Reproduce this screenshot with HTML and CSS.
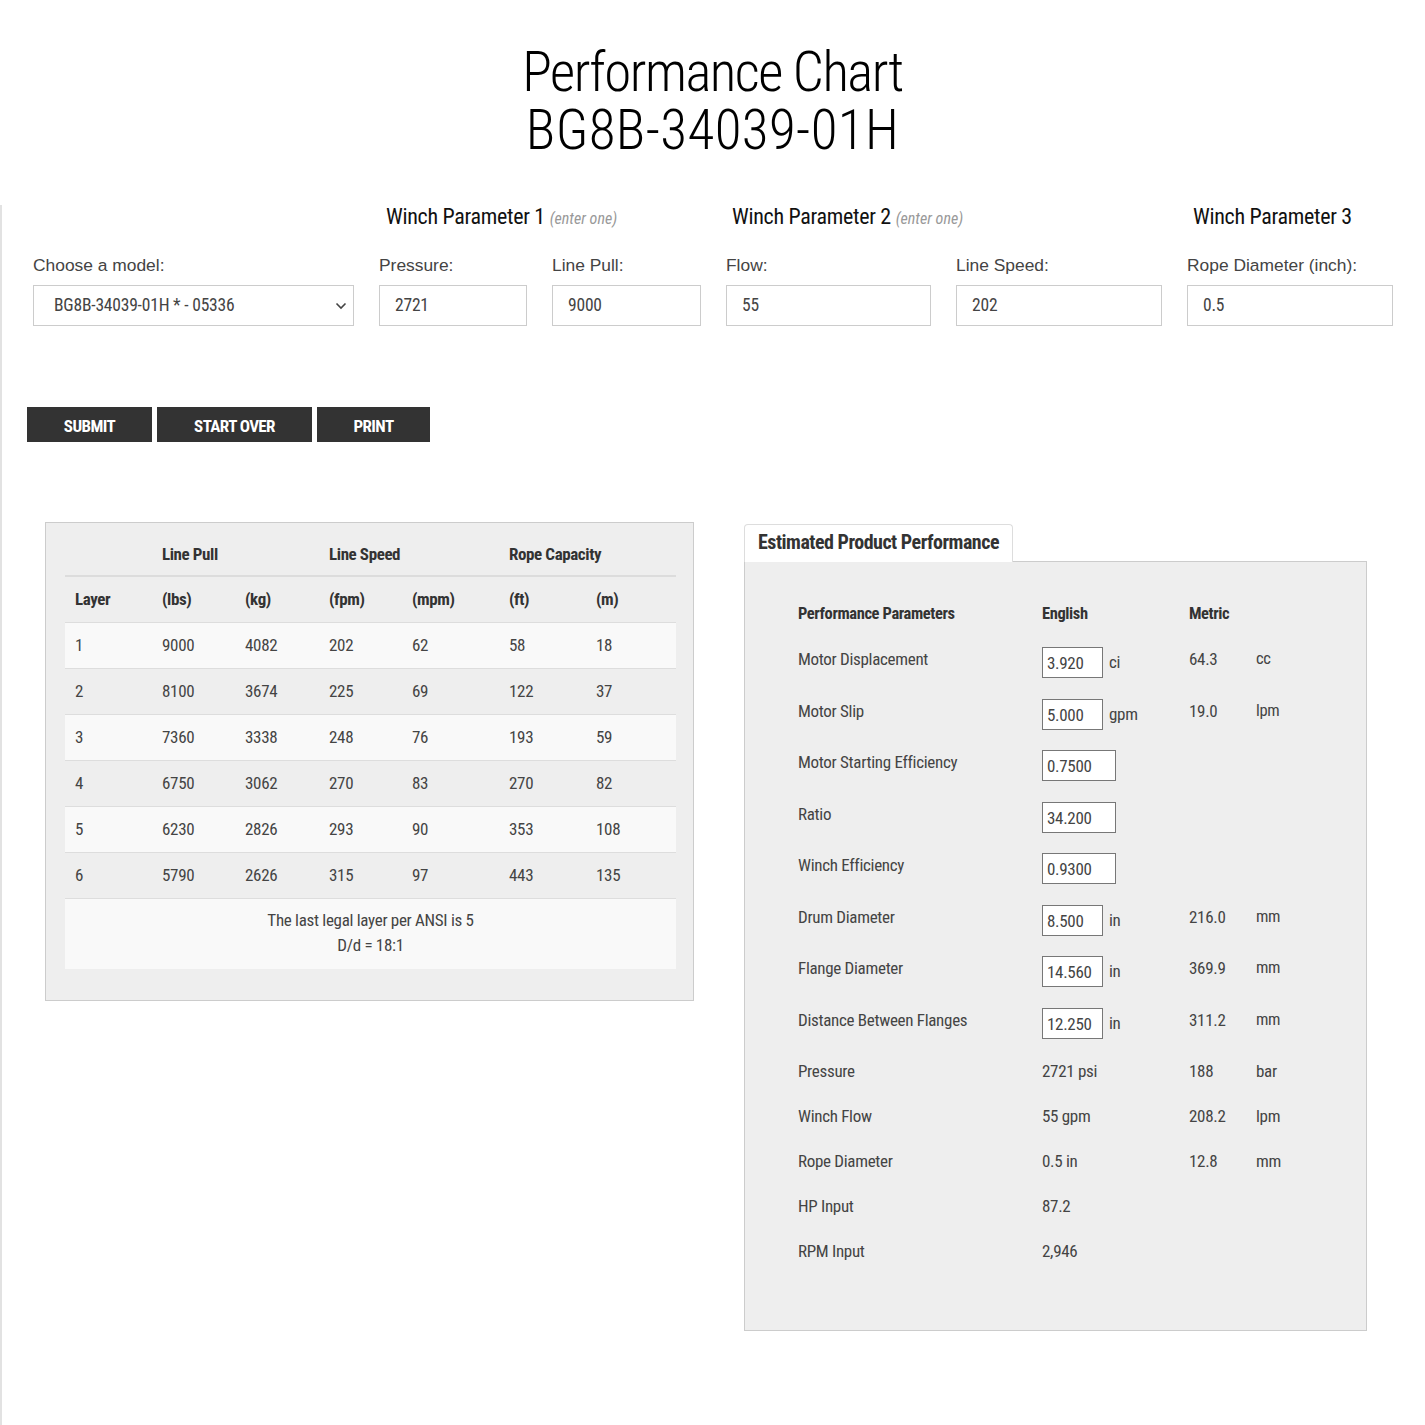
FILE: index.html
```html
<!DOCTYPE html>
<html lang="en">
<head>
<meta charset="utf-8">
<title>Performance Chart</title>
<link rel="stylesheet" href="styles.css">
</head>
<body>
<header class="page-title">
  <h1><span class="t1">Performance Chart</span><br><span class="t2">BG8B-34039-01H</span></h1>
</header>
<main class="content">
  <section class="params">
    <div class="param-heads">
      <div class="ph ph-1">Winch Parameter 1 <em>(enter one)</em></div>
      <div class="ph ph-2">Winch Parameter 2 <em>(enter one)</em></div>
      <div class="ph ph-3">Winch Parameter 3</div>
    </div>
    <div class="fields">
      <label class="field f-model"><span class="lbl">Choose a model:</span>
        <span class="select">BG8B-34039-01H * - 05336
          <svg class="chev" width="12" height="8" viewBox="0 0 12 8"><path d="M1.5 1.5 L6 6 L10.5 1.5" fill="none" stroke="#444" stroke-width="1.6"/></svg>
        </span>
      </label>
      <label class="field f-pressure"><span class="lbl">Pressure:</span><span class="inp">2721</span></label>
      <label class="field f-pull"><span class="lbl">Line Pull:</span><span class="inp">9000</span></label>
      <label class="field f-flow"><span class="lbl">Flow:</span><span class="inp">55</span></label>
      <label class="field f-speed"><span class="lbl">Line Speed:</span><span class="inp">202</span></label>
      <label class="field f-rope"><span class="lbl">Rope Diameter (inch):</span><span class="inp">0.5</span></label>
    </div>
  </section>

  <div class="buttons">
    <button class="btn b-submit">SUBMIT</button>
    <button class="btn b-start">START OVER</button>
    <button class="btn b-print">PRINT</button>
  </div>

  <section class="results">
    <div class="panel layers">
      <table class="layer-table">
        <colgroup>
          <col class="c1"><col class="c2"><col class="c3"><col class="c4"><col class="c5"><col class="c6"><col class="c7">
        </colgroup>
        <thead>
          <tr class="group-row"><th></th><th colspan="2">Line Pull</th><th colspan="2">Line Speed</th><th colspan="2">Rope Capacity</th></tr>
          <tr class="unit-row"><th>Layer</th><th>(lbs)</th><th>(kg)</th><th>(fpm)</th><th>(mpm)</th><th>(ft)</th><th>(m)</th></tr>
        </thead>
        <tbody>
          <tr class="odd"><td>1</td><td>9000</td><td>4082</td><td>202</td><td>62</td><td>58</td><td>18</td></tr>
          <tr><td>2</td><td>8100</td><td>3674</td><td>225</td><td>69</td><td>122</td><td>37</td></tr>
          <tr class="odd"><td>3</td><td>7360</td><td>3338</td><td>248</td><td>76</td><td>193</td><td>59</td></tr>
          <tr><td>4</td><td>6750</td><td>3062</td><td>270</td><td>83</td><td>270</td><td>82</td></tr>
          <tr class="odd"><td>5</td><td>6230</td><td>2826</td><td>293</td><td>90</td><td>353</td><td>108</td></tr>
          <tr><td>6</td><td>5790</td><td>2626</td><td>315</td><td>97</td><td>443</td><td>135</td></tr>
          <tr class="odd note"><td colspan="7">The last legal layer per ANSI is 5<br>D/d = 18:1</td></tr>
        </tbody>
      </table>
    </div>

    <div class="perf">
      <div class="tab">Estimated Product Performance</div>
      <div class="panel perf-panel">
        <div class="prow head"><span>Performance Parameters</span><span>English</span><span>Metric</span><span></span></div>
        <div class="prow irow"><span>Motor Displacement</span><span class="eng"><span class="box">3.920</span><span class="u">ci</span></span><span>64.3</span><span class="mu">cc</span></div>
        <div class="prow irow"><span>Motor Slip</span><span class="eng"><span class="box">5.000</span><span class="u">gpm</span></span><span>19.0</span><span class="mu">lpm</span></div>
        <div class="prow irow"><span>Motor Starting Efficiency</span><span class="eng"><span class="box wide">0.7500</span></span><span></span><span></span></div>
        <div class="prow irow"><span>Ratio</span><span class="eng"><span class="box wide">34.200</span></span><span></span><span></span></div>
        <div class="prow irow"><span>Winch Efficiency</span><span class="eng"><span class="box wide">0.9300</span></span><span></span><span></span></div>
        <div class="prow irow"><span>Drum Diameter</span><span class="eng"><span class="box">8.500</span><span class="u">in</span></span><span>216.0</span><span class="mu">mm</span></div>
        <div class="prow irow"><span>Flange Diameter</span><span class="eng"><span class="box">14.560</span><span class="u">in</span></span><span>369.9</span><span class="mu">mm</span></div>
        <div class="prow irow last-input"><span>Distance Between Flanges</span><span class="eng"><span class="box">12.250</span><span class="u">in</span></span><span>311.2</span><span class="mu">mm</span></div>
        <div class="prow"><span>Pressure</span><span>2721 psi</span><span>188</span><span>bar</span></div>
        <div class="prow"><span>Winch Flow</span><span>55 gpm</span><span>208.2</span><span>lpm</span></div>
        <div class="prow"><span>Rope Diameter</span><span>0.5 in</span><span>12.8</span><span>mm</span></div>
        <div class="prow"><span>HP Input</span><span>87.2</span><span></span><span></span></div>
        <div class="prow"><span>RPM Input</span><span>2,946</span><span></span><span></span></div>
      </div>
    </div>
  </section>
</main>
</body>
</html>
```

FILE: styles.css
```css
* { box-sizing: border-box; }
html, body { margin: 0; padding: 0; background: #fff; }
body {
  font-family: "Roboto Condensed", "Roboto", "Liberation Sans", Arial, sans-serif;
  font-stretch: 75%;
  color: #444;
  width: 1425px;
}

.page-title { padding-top: 43px; text-align: center; }
.page-title h1 {
  margin: 0;
  font-weight: 300;
  font-size: 55px;
  line-height: 58px;
  color: #000;
}
.t1 { letter-spacing: -1.5px; }
.t2 { letter-spacing: 0.4px; }

.content {
  margin-top: 46px;
  border-left: 2px solid #e2e2e2;
  min-height: 1220px;
  padding-left: 31px;
}

/* parameters */
.param-heads { position: relative; height: 24px; }
.ph {
  position: absolute;
  top: 0;
  font-size: 22px;
  line-height: 24px;
  color: #111;
  white-space: nowrap;
  letter-spacing: -0.3px;
}
.ph em { font-size: 16px; color: #999; letter-spacing: 0; }
.ph-1 { left: 353px; }
.ph-2 { left: 699px; }
.ph-3 { left: 1160px; }

.fields { display: flex; gap: 25px; margin-top: 24px; }
.field { display: flex; flex-direction: column; }
.lbl {
  font-family: "Liberation Sans", Arial, sans-serif;
  font-stretch: normal;
  font-size: 17.4px;
  line-height: 24px;
  color: #444;
  height: 24px;
  margin-bottom: 8px;
}
.inp, .select {
  height: 41px;
  border: 1px solid #ccc;
  background: #fff;
  font-size: 17.5px;
  letter-spacing: -0.2px;
  line-height: 39px;
  padding-left: 15px;
  color: #444;
}
.select { display: flex; justify-content: space-between; align-items: center; padding-left: 20px; padding-right: 5px; }
.chev { margin-right: 1px; }
.f-model { width: 321px; }
.f-pressure { width: 148px; }
.f-pull { width: 149px; }
.f-flow { width: 205px; }
.f-speed { width: 206px; }
.f-rope { width: 206px; }

/* buttons */
.buttons { display: flex; gap: 5px; margin-top: 81px; margin-left: -6px; }
.btn {
  height: 35px;
  border: 0;
  background: #333;
  color: #fff;
  font-family: "Roboto Condensed", "Roboto", "Liberation Sans", Arial, sans-serif;
  font-stretch: 75%;
  font-weight: bold;
  font-size: 17px;
  padding: 3px 0 0;
  letter-spacing: -0.6px;
}
.b-submit { width: 125px; }
.b-start { width: 155px; }
.b-print { width: 113px; }

/* results */
.results { display: flex; align-items: flex-start; margin-top: 80px; margin-left: 12px; }
.panel { background: #eee; border: 1px solid #ccc; }

.layers { width: 649px; height: 479px; padding: 10px 18px 0 19px; }
.layer-table { border-collapse: collapse; width: 611px; table-layout: fixed; font-size: 17px; letter-spacing: -0.3px; }
.c1 { width: 87px; } .c2 { width: 83px; } .c3 { width: 84px; } .c4 { width: 83px; }
.c5 { width: 97px; } .c6 { width: 87px; } .c7 { width: 90px; }
.layer-table th {
  text-align: left;
  font-weight: bold;
  font-size: 17px;
  color: #333;
  padding: 0 0 0 10px;
  letter-spacing: -0.4px;
}
.group-row th { height: 43px; border-bottom: 2px solid #dcdcdc; vertical-align: middle; padding-top: 0; }
.unit-row th { height: 46px; border-bottom: 1px solid #ddd; }
.layer-table td {
  height: 46px;
  padding: 0 0 0 10px;
  border-bottom: 1px solid #ddd;
  color: #444;
}
.layer-table tr.odd td { background: #f9f9f9; }
.layer-table tr.note td {
  text-align: center;
  height: 70px;
  line-height: 25px;
  padding: 9px 0 11px;
  border-bottom: 0;
}

.perf { margin-left: 50px; width: 623px; }
.tab {
  display: inline-block;
  height: 38px;
  padding: 0 13px;
  background: #fff;
  border: 1px solid #ddd;
  border-bottom: 0;
  border-radius: 4px 4px 0 0;
  font-size: 20px;
  font-weight: bold;
  line-height: 34px;
  color: #333;
  letter-spacing: -0.5px;
  position: relative;
  top: 1px;
  margin-top: 1px;
}
.perf-panel { height: 770px; padding: 40px 0 0 53px; font-size: 17px; letter-spacing: -0.3px; }
.prow {
  display: grid;
  grid-template-columns: 244px 147px 67px auto;
  line-height: 24px;
  margin-bottom: 21px;
  color: #444;
}
.prow.head { font-weight: bold; font-size: 16.5px; color: #333; letter-spacing: -0.4px; }
.prow.irow { height: 31px; margin-bottom: 20.5px; align-items: start; }
.eng { display: flex; align-items: center; height: 31px; }
.box {
  display: inline-block;
  width: 61px;
  height: 31px;
  border: 1px solid #777;
  background: #fff;
  line-height: 31px;
  padding-left: 4px;
  color: #444;
}
.box.wide { width: 74px; }
.u { margin-left: 6px; line-height: 31px; }
.mu { font-size: 16.5px; }
```
